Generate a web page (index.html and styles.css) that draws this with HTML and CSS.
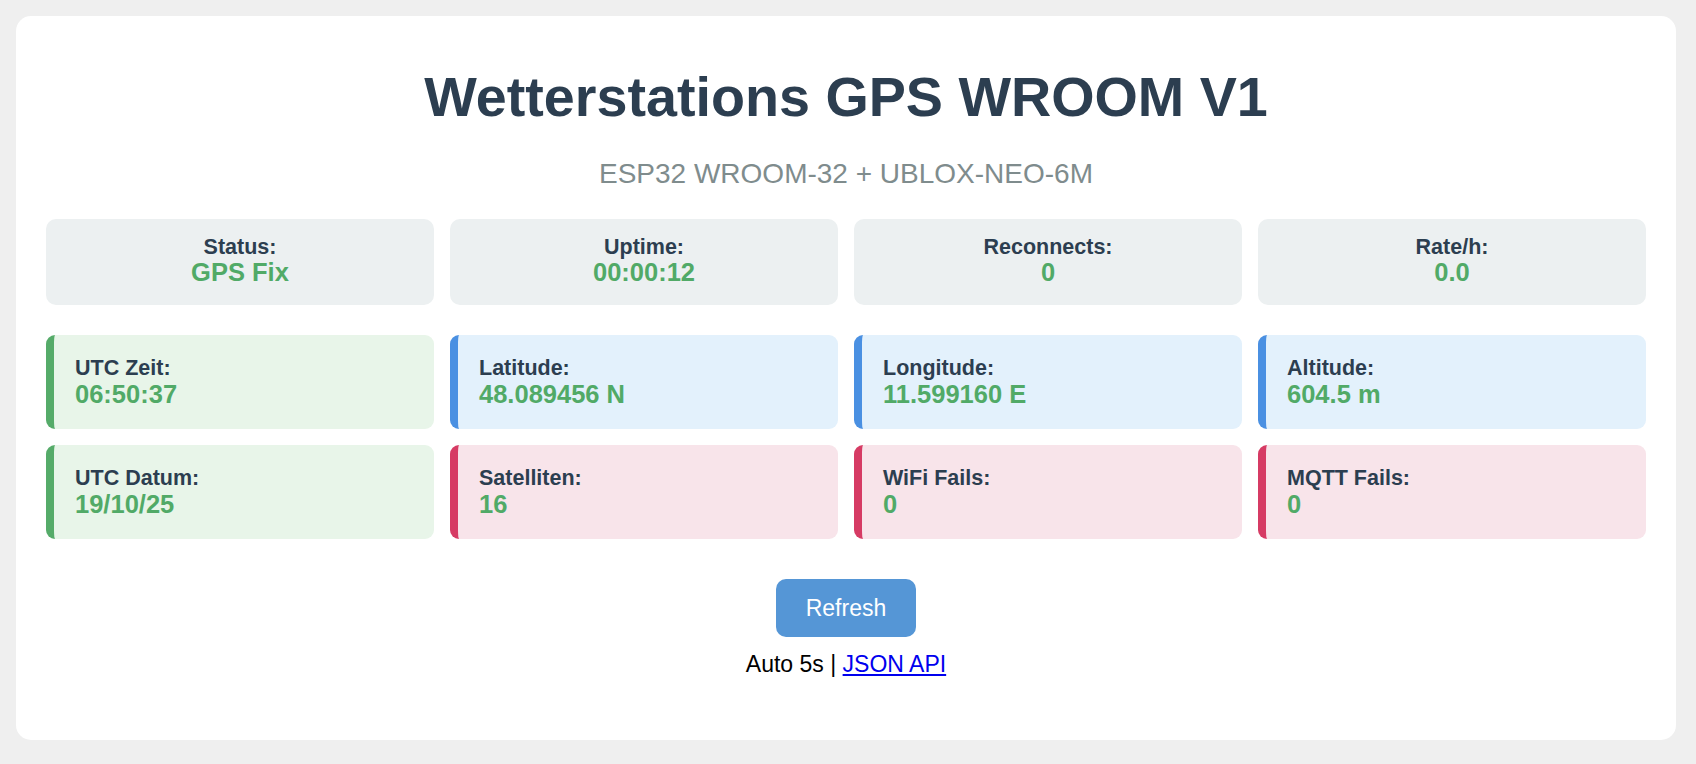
FILE: index.html
```html
<!DOCTYPE html>
<html lang="de">
<head>
<meta charset="utf-8">
<title>Wetterstations GPS WROOM V1</title>
<link rel="stylesheet" href="styles.css">
</head>
<body>
<div class="container">
  <h1 class="title">Wetterstations GPS WROOM V1</h1>
  <p class="subtitle">ESP32 WROOM-32 + UBLOX-NEO-6M</p>

  <div class="stats">
    <div class="stat"><div class="label">Status:</div><div class="value">GPS Fix</div></div>
    <div class="stat"><div class="label">Uptime:</div><div class="value">00:00:12</div></div>
    <div class="stat"><div class="label">Reconnects:</div><div class="value">0</div></div>
    <div class="stat"><div class="label">Rate/h:</div><div class="value">0.0</div></div>
  </div>

  <div class="grid">
    <div class="info green"><div class="label">UTC Zeit:</div><div class="value">06:50:37</div></div>
    <div class="info blue"><div class="label">Latitude:</div><div class="value">48.089456 N</div></div>
    <div class="info blue"><div class="label">Longitude:</div><div class="value">11.599160 E</div></div>
    <div class="info blue"><div class="label">Altitude:</div><div class="value">604.5 m</div></div>
    <div class="info green"><div class="label">UTC Datum:</div><div class="value">19/10/25</div></div>
    <div class="info pink"><div class="label">Satelliten:</div><div class="value">16</div></div>
    <div class="info pink"><div class="label">WiFi Fails:</div><div class="value">0</div></div>
    <div class="info pink"><div class="label">MQTT Fails:</div><div class="value">0</div></div>
  </div>

  <div class="actions">
    <button class="refresh" type="button">Refresh</button>
    <p class="footer">Auto 5s | <a href="#">JSON API</a></p>
  </div>
</div>
</body>
</html>
```

FILE: styles.css
```css
html, body {
  margin: 0;
  padding: 0;
}
body {
  background: #efefef;
  font-family: "Liberation Sans", Arial, Helvetica, sans-serif;
  padding: 16px;
}
.container {
  box-sizing: border-box;
  max-width: 1660px;
  min-height: 724px;
  background: #ffffff;
  border-radius: 15px;
  padding: 30px 30px 30px 30px;
}
.title {
  margin: 19px 0 0 0;
  text-align: center;
  font-size: 55.7px;
  font-weight: bold;
  color: #2c3e50;
  line-height: 64px;
}
.subtitle {
  margin: 29px 0 0 0;
  text-align: center;
  font-size: 28px;
  line-height: 32px;
  color: #7f8c8d;
}
.stats {
  margin-top: 29px;
  display: grid;
  grid-template-columns: repeat(4, 1fr);
  gap: 16px;
}
.stat {
  background: #ecf0f1;
  border-radius: 10px;
  padding: 16px 10px 17px;
  text-align: center;
  height: 86px;
  box-sizing: border-box;
}
.label {
  font-size: 21.5px;
  font-weight: bold;
  color: #2c3e50;
  line-height: 24px;
}
.value {
  font-size: 25.5px;
  font-weight: bold;
  color: #51aa67;
  line-height: 29px;
}
.stat .value {
  margin-top: -1px;
}
.grid {
  margin-top: 30px;
  display: grid;
  grid-template-columns: repeat(4, 1fr);
  gap: 16px;
}
.info {
  box-sizing: border-box;
  height: 94px;
  border-radius: 9px;
  border-left: 8px solid;
  padding: 21px 20px 20px 21px;
}
.info.green {
  background: #e8f5e9;
  border-left-color: #55ab69;
}
.info.blue {
  background: #e3f1fc;
  border-left-color: #4a90e2;
}
.info.pink {
  background: #f8e4ea;
  border-left-color: #d63b64;
}
.actions {
  margin-top: 40px;
  display: flex;
  flex-direction: column;
  align-items: center;
}
.refresh {
  width: 140px;
  height: 58px;
  background: #5596d6;
  color: #ffffff;
  border: none;
  border-radius: 10px;
  font-family: "Liberation Sans", Arial, Helvetica, sans-serif;
  font-size: 23px;
  padding: 0;
}
.footer {
  margin: 15px 0 0 0;
  font-size: 23px;
  line-height: 25px;
  color: #000000;
}
.footer a {
  color: #0000ee;
}
```
